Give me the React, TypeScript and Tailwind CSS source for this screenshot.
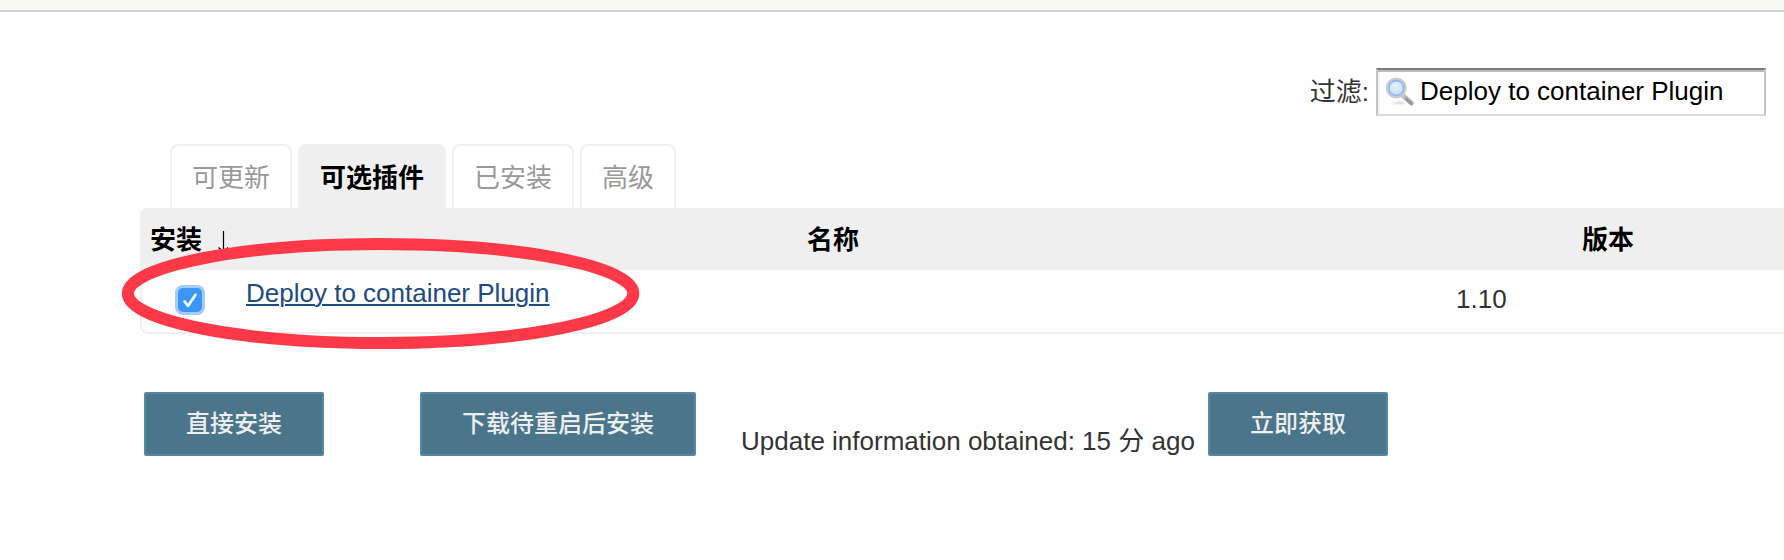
function SearchIcon() {
  return (
    <svg width="32" height="32" viewBox="0 0 32 32" className="shrink-0">
      <defs>
        <radialGradient id="lens" cx="0.45" cy="0.4" r="0.7">
          <stop offset="0" stopColor="#e6f2fe" />
          <stop offset="0.6" stopColor="#cbe1fb" />
          <stop offset="1" stopColor="#a5c7f2" />
        </radialGradient>
        <radialGradient id="shade">
          <stop offset="0" stopColor="#d2d2d2" />
          <stop offset="1" stopColor="#ffffff" stopOpacity="0" />
        </radialGradient>
      </defs>
      <ellipse cx="15" cy="27" rx="13" ry="3.5" fill="url(#shade)" />
      <path d="M19 19.5 L27.5 27" stroke="#bdbdbd" strokeWidth="5" strokeLinecap="round" />
      <path d="M22 22.8 L27.3 27.6" stroke="#979797" strokeWidth="3" strokeLinecap="round" />
      <circle cx="12.3" cy="12" r="9.2" fill="url(#lens)" stroke="#c6cbd6" strokeWidth="2.6" />
      <circle cx="12.3" cy="12" r="7.4" fill="none" stroke="#94b6e6" strokeWidth="1.6" />
    </svg>
  );
}

function Tab({ label, active = false }: { label: string; active?: boolean }) {
  return (
    <a
      className={
        active
          ? "h-16 rounded-t-lg border-2 border-b-0 border-[#efefef] bg-[#efefef] px-5 pt-[13px] font-bold leading-[39px] text-black"
          : "h-16 rounded-t-lg border-2 border-b-0 border-[#f0f0f0] bg-white px-5 pt-[13px] leading-[39px] text-[#999999]"
      }
    >
      {label}
    </a>
  );
}

function Button({ label }: { label: string }) {
  return (
    <button className="h-16 rounded-[2px] border-2 border-[#5488a0] bg-[#4b758b] px-10 text-[24px] font-medium leading-none text-[#eeeeee]">
      {label}
    </button>
  );
}

export default function App() {
  return (
    <div className="relative h-[560px] w-[1784px] overflow-hidden bg-[#fefefe] font-['Liberation_Sans','Noto_Sans_CJK_SC',sans-serif] text-[26px] text-[#333333]">
      <div className="h-3 border-b-2 border-[#d3d6cd] bg-[#f6faf2]" />

      <div className="flex h-[104px] items-end justify-end pr-[18px]">
        <label className="flex h-12 items-center whitespace-nowrap">
          <span className="mr-[7px]">过滤:</span>
          <span className="flex h-12 w-[390px] items-center border-2 border-b-[#dadada] border-l-[#c4c4c4] border-r-[#c4c4c4] border-t-[#7b7b7b] bg-white pl-[6px] text-black shadow-[inset_0_2px_0_#bdbdbd,inset_2px_0_0_#f3f3f3]">
            <SearchIcon />
            <span className="ml-1 pb-[2px]">Deploy to container Plugin</span>
          </span>
        </label>
      </div>

      <div className="mt-7 flex gap-[6px] pl-[170px]">
        <Tab label="可更新" />
        <Tab label="可选插件" active />
        <Tab label="已安装" />
        <Tab label="高级" />
      </div>

      <div className="ml-[140px] h-[126px] rounded-l-lg border-b-2 border-l-2 border-[#f0f0f0]">
        <div className="-ml-[2px] flex h-[62px] items-center rounded-tl-lg bg-[#efefef] pt-[2px] font-bold text-black">
          <div className="flex w-[667px] items-center pl-[10px]">
            安装
            <svg width="12" height="22" viewBox="0 0 12 22" className="ml-[15px] mt-1">
              <path d="M6.5 0V20M1.5 16.5L6.5 20.5L11 16.5" fill="none" stroke="#000000" strokeWidth="1.2" />
            </svg>
          </div>
          <div className="w-[775px]">名称</div>
          <div>版本</div>
        </div>
        <div className="flex h-[62px] items-start">
          <span className="ml-[33px] mt-[15px] flex size-[30px] items-center justify-center rounded-[8px] bg-[#a2ccf9]">
            <span className="flex size-6 items-center justify-center rounded-[5px] bg-[#3c96fa]">
              <svg width="24" height="24" viewBox="0 0 24 24">
                <path d="M6.5 13.5L10.2 17.8L17.5 6.8" fill="none" stroke="#ffffff" strokeWidth="2.6" strokeLinecap="round" strokeLinejoin="round" />
              </svg>
            </span>
          </span>
          <div className="ml-[41px] mt-2 w-[1210px] leading-[30px]">
            <a className="text-[#204a87] underline decoration-2 underline-offset-2 [text-decoration-skip-ink:auto]">
              Deploy to container Plugin
            </a>
          </div>
          <div className="mt-[14px] leading-[30px]">1.10</div>
        </div>
      </div>

      <div className="mt-[58px] flex h-16 whitespace-nowrap pl-36">
        <Button label="直接安装" />
        <div className="ml-24 flex">
          <Button label="下载待重启后安装" />
        </div>
        <div className="ml-[45px] mt-[34px] w-[467px] leading-[30px]">Update information obtained: 15 分 ago</div>
        <Button label="立即获取" />
      </div>

      <svg className="pointer-events-none absolute left-[120px] top-[236px]" width="524" height="116" viewBox="0 0 524 116">
        <ellipse cx="260.6" cy="57.5" rx="252.7" ry="49.5" fill="none" stroke="#fd3947" strokeWidth="12" />
      </svg>
    </div>
  );
}
